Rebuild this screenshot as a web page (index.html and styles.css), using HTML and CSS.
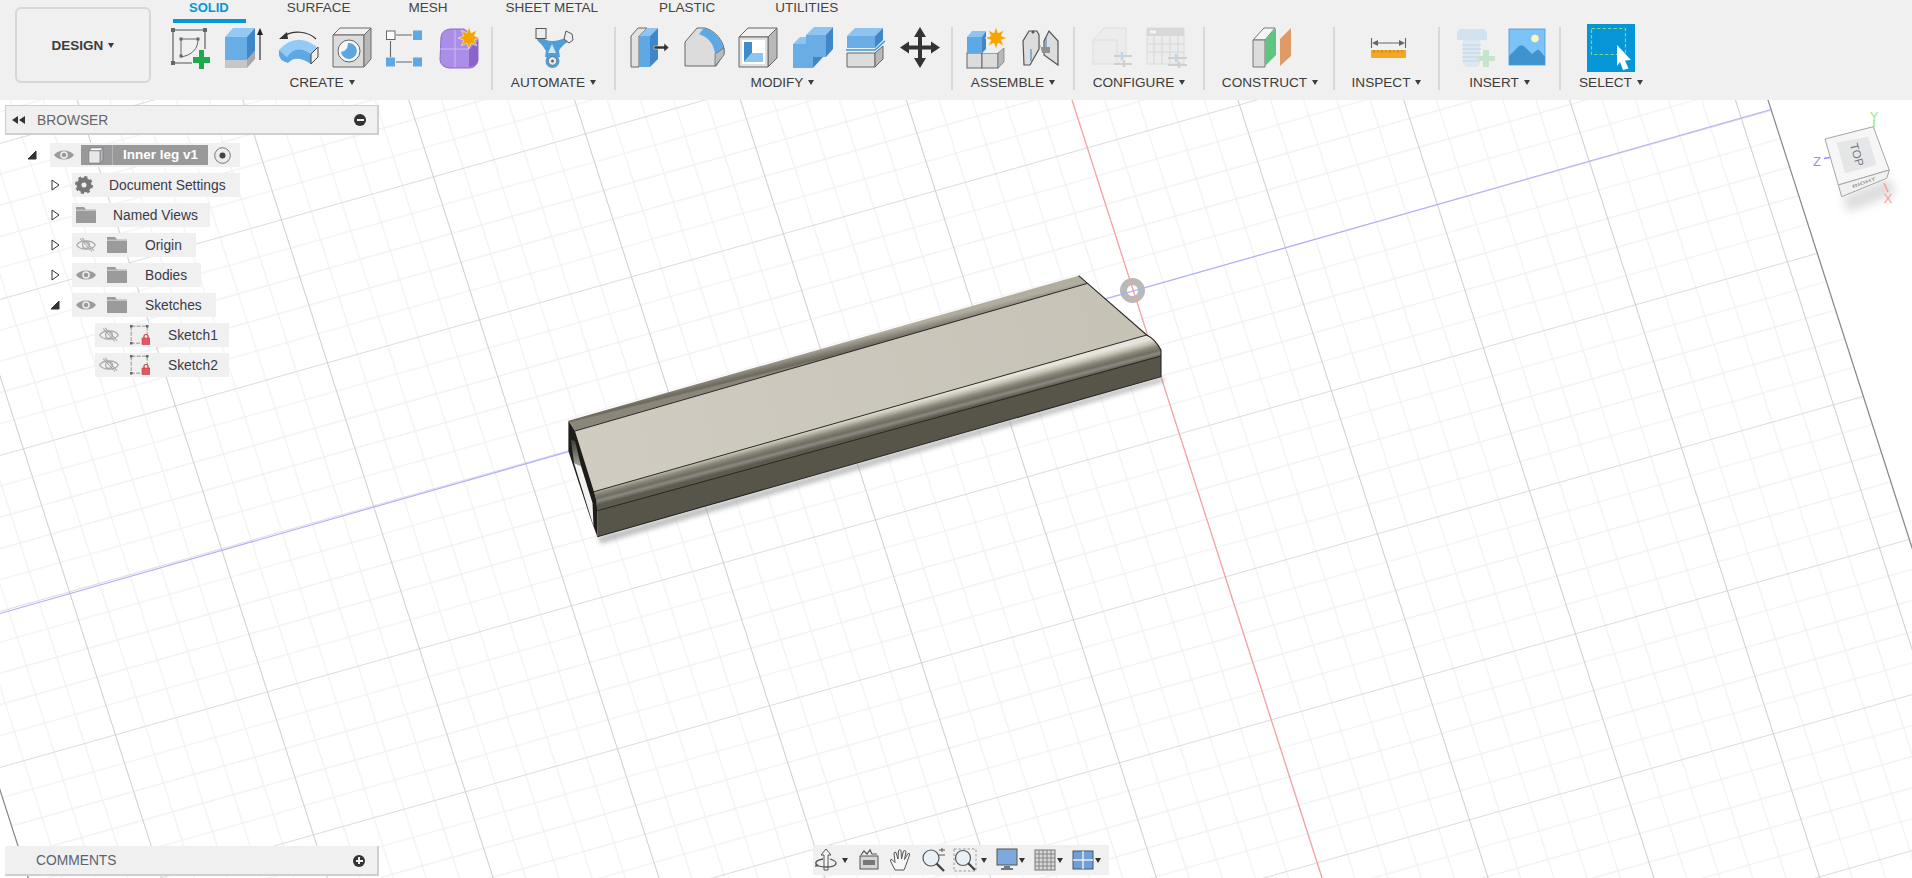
FILE: index.html
```html
<!DOCTYPE html>
<html lang="en">
<head>
<meta charset="utf-8">
<title>Inner leg v1</title>
<link rel="stylesheet" href="styles.css">
</head>
<body>
<svg class="defs" aria-hidden="true">
  <symbol id="eye" viewBox="0 0 20 20"><path d="M0 10C4 4 16 4 20 10C16 16 4 16 0 10Z" fill="#9b9b9b"/><circle cx="10" cy="10" r="3.8" fill="#f0f0f0"/><circle cx="10" cy="10" r="2.3" fill="#9b9b9b"/></symbol>
  <symbol id="eyeoff" viewBox="0 0 20 20"><path d="M0.7 10C4 4.5 16 4.5 19.3 10C16 15.5 4 15.5 0.7 10Z" fill="none" stroke="#a8a8a8" stroke-width="1.2"/><circle cx="10" cy="10" r="3.4" fill="none" stroke="#a8a8a8" stroke-width="1.2"/><path d="M4 3.5L16 16.5M6 2.8L18 15.6" stroke="#a8a8a8" stroke-width="1.1"/></symbol>
  <symbol id="folder" viewBox="0 0 20 16"><path d="M0 0H8L10 2.5H20V16H0Z" fill="#9b9b9b"/><path d="M0 3.2H20" stroke="#f0f0f0" stroke-width=".7"/></symbol>
  <symbol id="sketchlock" viewBox="0 0 20 20"><path d="M1.200 1.200H17.200V10M1.200 1.200V18.200H10" fill="none" stroke="#888" stroke-width=".9" stroke-dasharray="4 1.500"/><path d="M0 0h2.500v2.500h-2.500zM16 0h2.500v2.500h-2.500zM0 17h2.500v2.500h-2.500z" fill="#666"/><rect x="12" y="13" width="8" height="6.500" fill="#e2585e" stroke="#c43d43" stroke-width=".6"/><path d="M14 13V11.500a2 2 0 0 1 4 0V13" fill="none" stroke="#c43d43" stroke-width="1.200"/></symbol>
  <symbol id="star" viewBox="0 0 22 22"><path d="M11 0L13.100 5.900L18.800 3.200L16.100 8.900L22 11L16.100 13.100L18.800 18.800L13.100 16.100L11 22L8.900 16.100L3.200 18.800L5.900 13.100L0 11L5.900 8.900L3.200 3.200L8.900 5.900Z" fill="#f5a400" stroke="#f3f0e8" stroke-width=".6"/></symbol>
</svg>

<div class="app">
  <header class="toolbar">
    <button class="design caret">DESIGN</button>
    <div class="ribbon">
      <nav class="tabs">
        <span class="tab active">SOLID</span>
        <span class="tab">SURFACE</span>
        <span class="tab">MESH</span>
        <span class="tab">SHEET METAL</span>
        <span class="tab plastic">PLASTIC</span>
        <span class="tab utilities">UTILITIES</span>
      </nav>
      <div class="groups">
        <section class="group g-create">
          <div class="icons">
            <svg class="ic" viewBox="0 0 40 41"><path d="M3 3H35M3 3V36M3 36H22M35 3V22" stroke="#555" stroke-width="1.100" fill="none"/><path d="M1 1h4v4h-4zM33 1h4v4h-4zM1 34h4v4h-4z" fill="#666"/><path d="M11 12H28M11 12V29M28 12C28 22 22 28 11 30" stroke="#666" fill="none"/><path d="M9.500 10.500h3v3h-3zM26.500 10.500h3v3h-3zM9.500 27.500h3v3h-3z" fill="#666"/><path d="M23 30h6v-7h5v7h6v6h-6v6h-5v-6h-6z" fill="#20a84c"/></svg>
            <svg class="ic" viewBox="0 0 40 41"><path d="M1 10L9 1H31L23 10Z" fill="#93c9f3"/><path d="M1 10H23V33H1Z" fill="#69ade5"/><path d="M23 10L31 1V24L23 33Z" fill="#3f87c8"/><path d="M1 33H23V41H1Z" fill="#c6c6c6"/><path d="M23 33L31 24V32L23 41Z" fill="#a8a8a8"/><path d="M36 6V33" stroke="#222" stroke-width="1.100"/><path d="M36 1L33 8H39Z" fill="#222"/></svg>
            <svg class="ic" viewBox="0 0 40 41"><path d="M38 12C30 4 15 3 6 9" fill="none" stroke="#333" stroke-width="1.100"/><path d="M1 12L9 5L10 12Z" fill="#333"/><path d="M1 23Q18 4 39 20L33 27Q18 16 9 30Z" fill="#93cbf6"/><path d="M1 23L9 30Q18 16 33 27V37Q18 27 10 36Q1 33 1 28Z" fill="#5ca8e4"/><path d="M33 27L40 20V30L33 37Z" fill="#eee" stroke="#444"/></svg>
            <svg class="ic" viewBox="0 0 40 41"><path d="M1 8L8 1H39L32 8Z" fill="#f0f0f0" stroke="#6a6a6a"/><path d="M1 8H32V40H1Z" fill="#dcdcdc" stroke="#6a6a6a"/><path d="M32 8L39 1V32L32 40Z" fill="#b8b8b8" stroke="#6a6a6a"/><circle cx="17" cy="24" r="11" fill="#f7f7f7" stroke="#666"/><path d="M16 16a8 8 0 1 1-7 9q7-1 7-9z" fill="#5ea6e0"/></svg>
            <svg class="ic" viewBox="0 0 40 41"><path d="M10 8H26M4.500 14V30M10 35H26" stroke="#666" stroke-width="1.100"/><rect x=".5" y="4" width="8.500" height="8.500" fill="#fff" stroke="#666"/><rect x="27" y="3.500" width="9" height="9.500" fill="#5ea8e3"/><rect x="0" y="30.500" width="9" height="9" fill="#5ea8e3"/><rect x="27" y="30.500" width="9" height="9" fill="#5ea8e3"/></svg>
            <svg class="ic" viewBox="0 0 40 41"><path d="M1 10Q2 3 10 2H24L38 12V33Q37 40 30 41H9Q1 40 0 33Z" fill="#ab8ee8" stroke="#8a6cc8"/><path d="M29 22L38 14V33Q37 39 29 40Z" fill="#8b63c9"/><path d="M0 22H29M15 3V40" stroke="#cbbaf2"/><use href="#star" x="18" y="0" width="22" height="22"/></svg>
          </div>
          <div class="label caret">CREATE</div>
        </section>
        <section class="group g-automate">
          <div class="icons">
            <svg class="ic" viewBox="0 0 40 41"><path d="M5 9Q12 14 18 14Q25 14 33 10L35 14Q27 19 25 24L26 30H11L12 24Q9 18 3 13Z" fill="#4f9fd6"/><path d="M18 17L14 26H22Z" fill="#cfe5f5"/><circle cx="18.500" cy="34" r="7" fill="#4f9fd6"/><circle cx="18.500" cy="34" r="4.300" fill="#e8e8e8" stroke="#666" stroke-width=".8"/><circle cx="18.500" cy="34" r="1.500" fill="#666"/><rect x="2" y="1.500" width="10" height="10" fill="#eee" stroke="#555"/><path d="M32 4L38 7L39 13L35 16L30 12Z" fill="#eee" stroke="#555"/></svg>
          </div>
          <div class="label caret">AUTOMATE</div>
        </section>
        <section class="group g-modify">
          <div class="icons">
            <svg class="ic" viewBox="0 0 40 41"><path d="M1 40V9L8 1H17L9 9V40Z" fill="#e2e2e2" stroke="#666"/><path d="M9 9L17 1H28L20 9Z" fill="#8ec5f0"/><path d="M9 9H20V40H9Z" fill="#5ea8e3"/><path d="M20 9L28 1V32L20 40Z" fill="#3f87c8"/><path d="M24 19h10v-3l5 4.500-5 4.500v-3H24z" fill="#333" stroke="#fff" stroke-width=".5"/></svg>
            <svg class="ic" viewBox="0 0 40 41"><path d="M1 39V15L13 1H21C32 4 39 14 40 22V27L32 39Z" fill="#dcdcdc" stroke="#666"/><path d="M20 1C32 4 39 14 40 25L31 27C30 18 26 11 15 7Z" fill="#5ea8e3"/><path d="M31 27L40 21V28L31 39Z" fill="#bbb" stroke="#666" stroke-width=".7"/></svg>
            <svg class="ic" viewBox="0 0 40 41"><path d="M1 10L10 1H39L30 10Z" fill="#f0f0f0" stroke="#666"/><path d="M30 10L39 1V31L30 40Z" fill="#b8b8b8" stroke="#666"/><path d="M1 10H30V40H1Z" fill="#e0e0e0" stroke="#666"/><rect x="4" y="13" width="23" height="24" fill="#fff"/><path d="M6 15H14V26L6 35Z" fill="#3f8ccb"/><path d="M6 35L14 26H25V35Z" fill="#8ec5f0"/></svg>
            <svg class="ic" viewBox="0 0 40 41"><path d="M1 17L8 10H14V17Z" fill="#8ec5f0"/><path d="M1 17H21V41H1Z" fill="#6aade5"/><path d="M14 8H34V30H21V17H14Z" fill="#6aade5"/><path d="M14 8L22 0H41L34 8Z" fill="#8ec5f0"/><path d="M34 8L41 0V22L34 30Z" fill="#3f87c8"/><path d="M21 30H31L21 41Z" fill="#3f87c8"/></svg>
            <svg class="ic" viewBox="0 0 40 41"><path d="M1 9L9 1H37L29 9Z" fill="#8ec5f0"/><path d="M1 9H29V21H1Z" fill="#6aade5"/><path d="M29 9L37 1V13L29 21Z" fill="#3f87c8"/><path d="M0 23H29L39 14" fill="none" stroke="#2e9be0" stroke-width="1.600"/><path d="M1 26H29V40H1Z" fill="#dcdcdc" stroke="#666"/><path d="M29 26L37 19V32L29 40Z" fill="#b8b8b8" stroke="#666"/></svg>
            <svg class="ic" viewBox="0 0 40 41"><path d="M20 0L26 10H22V18.500H31V14.500L40 20.500L31 26.500V22.500H22V31H26L20 41L14 31H18V22.500H9V26.500L0 20.500L9 14.500V18.500H18V10H14Z" fill="#333"/></svg>
          </div>
          <div class="label caret">MODIFY</div>
        </section>
        <section class="group g-assemble">
          <div class="icons">
            <svg class="ic" viewBox="0 0 40 41"><rect x="1" y="26" width="15" height="15" fill="#dcdcdc" stroke="#666"/><rect x="16" y="26" width="16" height="15" fill="#dcdcdc" stroke="#666"/><path d="M16 26L22 21H38L32 26Z" fill="#eee"/><path d="M32 26L38 21V35L32 41Z" fill="#b8b8b8" stroke="#666" stroke-width=".6"/><path d="M1 10L6 4H20L16 10Z" fill="#8ec5f0"/><path d="M1 10H16V26H1Z" fill="#5ea8e3"/><path d="M16 10L20 4V22L16 26Z" fill="#3f87c8"/><use href="#star" x="19" y="0" width="22" height="22"/></svg>
            <svg class="ic" viewBox="0 0 40 41"><path d="M4 38L3 14L9 4H17L19 8V22L10 38Z" fill="#ddd" stroke="#555" stroke-width="1.200"/><path d="M24 14L29 4L38 14V38L24 28Z" fill="#ddd" stroke="#555" stroke-width="1.200"/><path d="M19 12V20H30V26H22" fill="#8f8f8f"/><path d="M11 22V34M26 10V20" stroke="#3f87c8" stroke-width="1.100"/><circle cx="13" cy="5" r="1.500" fill="#555"/></svg>
          </div>
          <div class="label caret">ASSEMBLE</div>
        </section>
        <section class="group g-configure">
          <div class="icons">
            <svg class="ic" viewBox="0 0 40 41"><path d="M1 13L12 1H34V28L26 37H1Z" fill="#ececec" stroke="#dedede"/><path d="M1 13H25V37" fill="none" stroke="#dedede"/><path d="M22 29H40M22 37H40" stroke="#cfcfcf" stroke-width="2"/><path d="M30 25V33" stroke="#bcd7ec" stroke-width="2.500"/><path d="M32 33V40" stroke="#cfcfcf" stroke-width="2.500"/></svg>
            <svg class="ic" viewBox="0 0 40 41"><rect x="1" y="1" width="37" height="36" fill="#ececec" stroke="#dcdcdc"/><rect x="1" y="1" width="37" height="8" fill="#d8d8d8"/><rect x="4" y="3.500" width="6" height="3" fill="#f4f4f4"/><path d="M8 9V37M16 9V37M24 9V37M32 9V37M1 17H38M1 25H38" stroke="#d6d6d6"/><path d="M22 31H41M22 38H41" stroke="#cfcfcf" stroke-width="2"/><path d="M30 27V35" stroke="#bcd7ec" stroke-width="2.500"/><path d="M33 35V41" stroke="#cfcfcf" stroke-width="2.500"/></svg>
          </div>
          <div class="label caret">CONFIGURE</div>
        </section>
        <section class="group g-construct">
          <div class="icons">
            <svg class="ic" viewBox="0 0 40 41"><path d="M2 13L13 1H24L14 13Z" fill="#f6f6f6" stroke="#777"/><path d="M2 13H14V40H2Z" fill="#dcdcdc" stroke="#777"/><path d="M14 13L25 1V28L14 39Z" fill="#5ec47f"/><path d="M29 12L40 1V29L29 39Z" fill="#e09a66"/></svg>
          </div>
          <div class="label caret">CONSTRUCT</div>
        </section>
        <section class="group g-inspect">
          <div class="icons">
            <svg class="ic" viewBox="0 0 40 41"><path d="M4.500 11V21M38.500 11V21M8 16H35" stroke="#666" stroke-width="1.100"/><path d="M5 16L11 13V19ZM38 16L32 13V19Z" fill="#666"/><rect x="4" y="23" width="35" height="8" fill="#f5a623"/><path d="M7 23v3M11 23v2M15 23v3M19 23v2M23 23v3M27 23v2M31 23v3M35 23v2" stroke="#a8701a" stroke-width=".8"/></svg>
          </div>
          <div class="label caret">INSPECT</div>
        </section>
        <section class="group g-insert">
          <div class="icons">
            <svg class="ic" viewBox="0 0 40 41"><path d="M4 7Q4 2 8 2H29Q34 2 34 7V13H4Z" fill="#d2e2ef"/><path d="M10 13H27V37L24 40H13L10 37Z" fill="#dbe8f2"/><path d="M9 18H28M9 22H28M9 26H28M9 30H28M9 34H27" stroke="#c2d5e4"/><path d="M30 23h6v6h6v5h-6v6h-6v-6h-6v-5h6z" fill="#c6e4cc"/></svg>
            <svg class="ic" viewBox="0 0 40 41"><rect x="3" y="2" width="36" height="36" fill="#7cc4f8"/><path d="M3 29L13 19Q16 17 19 20L26 27L31 23Q33 22 35 25L39 30V38H3Z" fill="#3f94d0"/><circle cx="29" cy="11.500" r="3.800" fill="#fdf5c0"/><rect x="3" y="2" width="36" height="36" fill="none" stroke="#4d9ad4" stroke-width=".8"/></svg>
          </div>
          <div class="label caret">INSERT</div>
        </section>
        <section class="group g-select">
          <div class="icons">
            <svg class="ic-sel" viewBox="0 0 48 48"><rect width="48" height="48" fill="#0696d7"/><rect x="4.500" y="4.500" width="34" height="26" fill="none" stroke="#78dc88" stroke-width="1.200" stroke-dasharray="3.500 2"/><path d="M30 21L44 36L38 36.500L41.500 44.500L36 46L33 38L30 42Z" fill="#fff"/></svg>
          </div>
          <div class="label caret">SELECT</div>
        </section>
      </div>
    </div>
  </header>

  <main class="viewport">
    <svg class="scene" viewBox="0 100 1912 778">
      <defs>
        <pattern id="gridcell" patternUnits="userSpaceOnUse" width="100" height="100">
          <path d="M20 0V100M40 0V100M60 0V100M80 0V100M0 20H100M0 40H100M0 60H100M0 80H100" stroke="#f0f0f2" stroke-width=".7" fill="none"/>
          <path d="M0 0.300H100" stroke="#dcdcdc" stroke-width=".7"/>
          <path d="M0.300 0V100" stroke="#cfcfcf" stroke-width=".7"/>
        </pattern>
        <linearGradient id="backBand" gradientUnits="userSpaceOnUse" x1="823" y1="347" x2="826" y2="359">
          <stop offset="0" stop-color="#b2ae9f"/><stop offset=".3" stop-color="#98948a"/><stop offset=".6" stop-color="#7e7a6d"/><stop offset=".85" stop-color="#6d695d"/><stop offset="1" stop-color="#8a867a"/>
        </linearGradient>
        <linearGradient id="frontBand" gradientUnits="userSpaceOnUse" x1="870" y1="413" x2="875" y2="432">
          <stop offset="0" stop-color="#e6e4dc"/><stop offset=".2" stop-color="#c6c3b7"/><stop offset=".45" stop-color="#8a867a"/><stop offset=".65" stop-color="#6f6c62"/><stop offset=".8" stop-color="#8b8983"/><stop offset="1" stop-color="#5d5a50"/>
        </linearGradient>
        <linearGradient id="flat" gradientUnits="userSpaceOnUse" x1="580" y1="460" x2="1140" y2="310">
          <stop offset="0" stop-color="#d0ccc2"/><stop offset="1" stop-color="#c6c2b6"/>
        </linearGradient>
        <linearGradient id="inner" gradientUnits="userSpaceOnUse" x1="571" y1="440" x2="578" y2="466">
          <stop offset="0" stop-color="#3d3b36"/><stop offset="1" stop-color="#a5a39d"/>
        </linearGradient>
        <filter id="soft" x="-10%" y="-50%" width="120%" height="200%"><feGaussianBlur stdDeviation="2"/></filter>
        <filter id="softer" x="-50%" y="-50%" width="200%" height="200%"><feGaussianBlur stdDeviation="5"/></filter>
      </defs>

      <g transform="matrix(1.52 -.43 .46 1.43 1132.8 290.5)">
        <rect x="-780" y="-600" width="1200" height="1200" fill="url(#gridcell)"/>
        <path d="M-780 -600V600M420 -600V600" stroke="#8a8a8a" stroke-width=".8"/>
      </g>
      <circle cx="1132.500" cy="290.500" r="9" fill="none" stroke="#b9b9b9" stroke-width="7"/>
      <path d="M0 613.500L1771 109.500" stroke="#adadff" stroke-width="1.100"/>
      <path d="M1072 100L1322 878" stroke="#ff9c9c" stroke-width="1.100"/>

      <path d="M597 537L1161 377L1166 381L601 544Z" fill="#8f8f8f" opacity=".55" filter="url(#soft)"/>
      <path d="M597.300 510L1161 354V376.700L597.300 536.700Z" fill="#57544a"/>
      <path d="M568.400 420.700L1078.600 275.700L1087 283.500L575 431Z" fill="url(#backBand)"/>
      <path d="M575 431L1087 283.500L1146.700 335L594 491.700Z" fill="url(#flat)"/>
      <path d="M594 491.700L1146.700 335Q1155 339 1161 350V356L597.300 510.700Q596 498 594 491.700Z" fill="url(#frontBand)"/>
      <path d="M568.400 420.700L575 431L594 491.700Q597 500 597.300 510.700V536.700L590 517L568.400 451Z" fill="#1e1d1a"/>
      <path d="M571 440L575 441L581 466L574 463Z" fill="url(#inner)"/>
      <path d="M574 463L581 466L592.500 503L593.500 526Z" fill="#f3f3f3"/>
      <path d="M575 431L1087 283.500M594 491.700L1146.700 335M597.300 510.700L1161 356" stroke="#29281f" stroke-width="1" fill="none"/>
      <path d="M1078.600 275.700L1146.700 335Q1155 339 1161 350V376.700L597.300 536.700" stroke="#26251f" stroke-width="1.100" fill="none"/>

      <path d="M1842 197L1889 178L1896 194L1848 212Z" fill="#777" opacity=".25" filter="url(#softer)"/>
      <path d="M1874 120V127" stroke="#8fef8f" stroke-width="1.500"/>
      <path d="M1824 158.500L1830 157.500" stroke="#8f8fff" stroke-width="1.500"/>
      <path d="M1884 183L1888 192" stroke="#ff9a9a" stroke-width="1.500"/>
      <text class="axis" x="1874" y="121" fill="#8fef8f">Y</text>
      <text class="axis" x="1817" y="166" fill="#8f8fff">Z</text>
      <text class="axis" x="1888" y="203" fill="#ff9a9a">X</text>
      <path d="M1825 139L1873.300 126.700L1889.300 170L1838.300 185Z" fill="#f6f6f6" stroke="#a5a5a5"/>
      <path d="M1838.300 185L1889.300 170L1886.700 178.300L1841.700 196.700Z" fill="#f1f1f1" stroke="#a5a5a5"/>
      <path d="M1836.700 142.700L1868 136.700L1876.700 165L1845 173.300Z" fill="#e5e6e8"/>
      <text class="cube-top" transform="translate(1856 155) rotate(74)">TOP</text>
      <text class="cube-right" transform="translate(1864 183) rotate(-20) scale(1 .55)">RIGHT</text>
    </svg>

    <aside class="panel panel-browser">
      <div class="panel-head">
        <svg class="rew" viewBox="0 0 13 8"><path d="M6 0V8L0 4ZM13 0V8L7 4Z" fill="#333"/></svg>
        <span class="panel-title">BROWSER</span>
        <span class="dot dot-minus"></span>
      </div>
    </aside>

    <div class="tree">
      <div class="row d0">
        <span class="exp"><svg viewBox="0 0 10 10"><path d="M9 1V9H1Z" fill="#333" stroke="#333"/></svg></span>
        <div class="chip chip-root">
          <svg class="t-eye"><use href="#eye"/></svg>
          <div class="selected">
            <svg class="cube" viewBox="0 0 18 18"><path d="M2 4L5 1H17L14 4Z" fill="#fff" stroke="#777" stroke-width=".7"/><path d="M2 4H14V17H2Z" fill="#e6e8ec" stroke="#777" stroke-width=".7"/><path d="M14 4L17 1V14L14 17Z" fill="#b4b8c0" stroke="#777" stroke-width=".7"/></svg>
            <span class="sel-text">Inner leg v1</span>
          </div>
          <svg class="radio" viewBox="0 0 17 17"><circle cx="8.500" cy="8.500" r="7.800" fill="#ececec" stroke="#777"/><circle cx="8.500" cy="8.500" r="3" fill="#444"/></svg>
        </div>
      </div>
      <div class="row d1">
        <span class="exp"><svg viewBox="0 0 10 12"><path d="M2 1L9 6L2 11Z" fill="#fff" stroke="#333"/></svg></span>
        <div class="chip chip-doc">
          <svg class="gear" viewBox="0 0 18 18"><circle cx="9" cy="9" r="5" fill="none" stroke="#777" stroke-width="5"/><circle cx="9" cy="9" r="7.800" fill="none" stroke="#777" stroke-width="2.400" stroke-dasharray="3.100 3.030"/></svg>
          <span class="name">Document Settings</span>
        </div>
      </div>
      <div class="row d1">
        <span class="exp"><svg viewBox="0 0 10 12"><path d="M2 1L9 6L2 11Z" fill="#fff" stroke="#333"/></svg></span>
        <div class="chip chip-views">
          <svg class="t-folder first"><use href="#folder"/></svg>
          <span class="name">Named Views</span>
        </div>
      </div>
      <div class="row d1">
        <span class="exp"><svg viewBox="0 0 10 12"><path d="M2 1L9 6L2 11Z" fill="#fff" stroke="#333"/></svg></span>
        <div class="chip chip-origin">
          <svg class="t-eye"><use href="#eyeoff"/></svg>
          <svg class="t-folder"><use href="#folder"/></svg>
          <span class="name">Origin</span>
        </div>
      </div>
      <div class="row d1">
        <span class="exp"><svg viewBox="0 0 10 12"><path d="M2 1L9 6L2 11Z" fill="#fff" stroke="#333"/></svg></span>
        <div class="chip chip-bodies">
          <svg class="t-eye"><use href="#eye"/></svg>
          <svg class="t-folder"><use href="#folder"/></svg>
          <span class="name">Bodies</span>
        </div>
      </div>
      <div class="row d1">
        <span class="exp"><svg viewBox="0 0 10 10"><path d="M9 1V9H1Z" fill="#333" stroke="#333"/></svg></span>
        <div class="chip chip-sketches">
          <svg class="t-eye"><use href="#eye"/></svg>
          <svg class="t-folder"><use href="#folder"/></svg>
          <span class="name">Sketches</span>
        </div>
      </div>
      <div class="row d2">
        <div class="chip chip-sketch">
          <svg class="t-eye"><use href="#eyeoff"/></svg>
          <svg class="t-lock"><use href="#sketchlock"/></svg>
          <span class="name">Sketch1</span>
        </div>
      </div>
      <div class="row d2">
        <div class="chip chip-sketch">
          <svg class="t-eye"><use href="#eyeoff"/></svg>
          <svg class="t-lock"><use href="#sketchlock"/></svg>
          <span class="name">Sketch2</span>
        </div>
      </div>
    </div>

    <aside class="panel panel-comments">
      <div class="panel-head">
        <span class="panel-title">COMMENTS</span>
        <span class="dot dot-plus"></span>
      </div>
    </aside>

    <div class="navbar">
      <div class="nav-group">
        <svg class="nv" viewBox="0 0 24 24"><path d="M12 1L17 7H14V22H10V7H7Z" fill="#f4f4f4" stroke="#555"/><path d="M9 11C3 12 1 14 2 16C4 19 10 19 12 19C17 19 22 18 22 15C22 13 19 12 16 11" fill="none" stroke="#555" stroke-width="1.300"/><path d="M2 15L1 19L5 18Z" fill="#555"/></svg>
        <i class="tri"></i>
      </div>
      <div class="nav-group">
        <svg class="nv" viewBox="0 0 24 24"><rect x="3" y="8" width="18" height="13" fill="#d5d5d5" stroke="#555"/><rect x="6" y="12" width="12" height="5" fill="#777"/><path d="M4 7L7 3L10 6L13 2L15 6H20" fill="none" stroke="#555" stroke-width="1.200"/></svg>
      </div>
      <div class="nav-group">
        <svg class="nv" viewBox="0 0 24 24"><path d="M6 22L1.500 13Q1 11 3 11.500L6 14.500L5 5Q5.500 3.500 7 4.500L9 11L9.500 2.500Q11 1 12 2.500L12.500 11L14.500 3Q16 2 17 3.500L15.500 11.500L19 5.500Q21 5 20.500 7L17 17L15 22Z" fill="#f6f6f6" stroke="#555"/></svg>
      </div>
      <div class="nav-group">
        <svg class="nv" viewBox="0 0 24 24"><circle cx="10" cy="10" r="8" fill="#e8f1f8" stroke="#555" stroke-width="1.200"/><path d="M15.500 15.500L23 23" stroke="#444" stroke-width="2.400"/><path d="M18 2H24M21 0V4M18 7H24" stroke="#555"/></svg>
      </div>
      <div class="nav-group">
        <svg class="nv" viewBox="0 0 24 24"><rect x="1" y="1" width="22" height="22" fill="none" stroke="#999" stroke-dasharray="2.500 2"/><circle cx="10" cy="10" r="7.500" fill="#e8f1f8" stroke="#555" stroke-width="1.200"/><path d="M15 15L22 22" stroke="#444" stroke-width="2.400"/></svg>
        <i class="tri"></i>
      </div>
      <div class="nav-group tight">
        <svg class="nv small" viewBox="0 0 22 24"><rect x="1" y="1" width="20" height="16" fill="#7ea9dc" stroke="#555"/><path d="M8 18H14V20H17V22H5V20H8Z" fill="#777"/></svg>
        <i class="tri"></i>
      </div>
      <div class="nav-group tight">
        <svg class="nv small" viewBox="0 0 22 24"><rect x="1" y="2" width="20" height="20" fill="#d7d7d7" stroke="#777"/><path d="M5 2V22M9 2V22M13 2V22M17 2V22M1 6H21M1 10H21M1 14H21M1 18H21" stroke="#777" stroke-width=".8"/></svg>
        <i class="tri"></i>
      </div>
      <div class="nav-group tight">
        <svg class="nv small" viewBox="0 0 22 24"><rect x="1" y="3" width="20" height="18" fill="#6f9fd8" stroke="#456"/><path d="M11 3V21M1 12H21" stroke="#f0f0f0" stroke-width="1.400"/></svg>
        <i class="tri"></i>
      </div>
    </div>
  </main>
</div>
</body>
</html>
```
FILE: styles.css
```css
* { box-sizing: border-box; }
html, body { margin: 0; height: 100%; overflow: hidden; }
body { font-family: "Liberation Sans", Arial, sans-serif; color: #3c3c3c; background: #fff; }
.defs { position: absolute; width: 0; height: 0; }

.app { display: flex; flex-direction: column; height: 878px; }

.toolbar { display: flex; align-items: flex-start; height: 100px; flex: none; padding-left: 15px; background: #f0f0f0; }
.design { width: 136px; height: 76px; margin: 7px 8px 0 0; padding: 0; border: 2px solid #d6d6d6; border-radius: 6px; background: #f0f0f0; font: bold 13.5px "Liberation Sans", Arial, sans-serif; color: #3c3c3c; }
.caret::after { content: ""; display: inline-block; margin-left: 5px; vertical-align: 2px; border-left: 3.5px solid transparent; border-right: 3.5px solid transparent; border-top: 5px solid #3c3c3c; }

.ribbon { display: flex; flex-direction: column; }
.tabs { display: flex; gap: 58px; height: 27px; padding-left: 30px; font-size: 13.5px; line-height: 16px; }
.tab { position: relative; height: 16px; color: #444; white-space: nowrap; }
.tab.plastic { margin-left: 3px; }
.tab.utilities { margin-left: 2px; }
.tab.active { color: #0696d7; font-weight: bold; font-size: 13px; }
.tab.active::after { content: ""; position: absolute; left: -16px; right: -17px; top: 19px; height: 4px; background: #0696d7; }

.groups { display: flex; height: 63px; }
.group { display: flex; flex-direction: column; align-items: center; height: 63px; border-right: 2px solid #d8d8d8; }
.g-create { width: 334px; }
.g-automate { width: 123px; }
.g-modify { width: 337px; }
.g-assemble { width: 122px; }
.g-configure { width: 130px; }
.g-construct { width: 130px; }
.g-inspect { width: 105px; }
.g-insert { width: 121px; }
.g-select { width: 100px; border-right: 0; }

.icons { display: flex; gap: 14px; height: 41px; }
.g-modify .icons { margin-left: 3px; }
.g-construct .icons { margin-left: 3px; }
.g-insert .icons { gap: 13px; }
.ic { width: 40px; height: 41px; overflow: visible; }
.ic-sel { width: 48px; height: 48px; margin-top: -3px; }
.label { margin-top: 6px; height: 18px; font-size: 13.6px; line-height: 18px; color: #3c3c3c; white-space: nowrap; }
.g-create .label { margin-right: 6px; }
.g-modify .label { margin-right: 2px; }
.g-construct .label { margin-left: 2px; }

.viewport { position: relative; flex: 1; overflow: hidden; background: #fff; }
.scene { position: absolute; inset: 0; width: 1912px; height: 778px; }
.axis { font: 13px "Liberation Sans", Arial, sans-serif; text-anchor: middle; }
.cube-top { font: 11.5px "Liberation Sans", Arial, sans-serif; fill: #777; text-anchor: middle; dominant-baseline: middle; }
.cube-right { font: bold 8px "Liberation Sans", Arial, sans-serif; fill: #999; text-anchor: middle; dominant-baseline: middle; }

.panel { position: absolute; left: 5px; width: 374px; height: 30px; background: #f0f0f0; border: 1px solid #cfcfcf; border-bottom-width: 2px; border-right-width: 2px; }
.panel-browser { top: 5px; }
.panel-comments { bottom: 2px; border-top: 0; border-left: 0; }
.panel-head { display: flex; align-items: center; height: 100%; padding: 1px 11px 0 6px; }
.panel-comments .panel-head { padding-left: 31px; padding-right: 12px; }
.rew { width: 13px; height: 8px; margin-right: 12px; }
.panel-title { flex: 1; font-size: 13.800px; color: #666; }
.panel-comments .panel-title { color: #5a6470; }
.dot { position: relative; width: 12px; height: 12px; border-radius: 50%; background: #333; }
.dot::before { content: ""; position: absolute; left: 2.500px; right: 2.500px; top: 5px; height: 2px; background: #f0f0f0; }
.dot-plus::after { content: ""; position: absolute; top: 2.500px; bottom: 2.500px; left: 5px; width: 2px; background: #f0f0f0; }

.tree { position: absolute; top: 43px; left: 0; display: flex; flex-direction: column; gap: 6px; font-size: 13.800px; color: #3a3a4a; }
.row { display: flex; align-items: center; height: 24px; }
.d0 { padding-left: 27px; }
.d1 { padding-left: 50px; }
.d2 { padding-left: 95px; }
.exp { display: flex; align-items: center; flex: none; }
.exp svg { width: 10px; height: 12px; }
.d0 .exp { width: 23px; }
.d1 .exp { width: 22px; }
.chip { display: flex; align-items: center; height: 24px; background: #f0f0f0; }
.chip-root { width: 190px; padding-left: 4px; }
.chip-doc { width: 168px; }
.chip-views { width: 138px; }
.chip-origin { width: 124px; }
.chip-bodies { width: 129px; }
.chip-sketches { width: 144px; }
.chip-sketch { width: 134px; padding-left: 4px; }
.t-eye { width: 20px; height: 20px; flex: none; margin-left: 4px; }
.chip-root .t-eye { margin-left: 0; margin-right: 7px; }
.chip-sketch .t-eye { margin-left: 0; }
.t-folder { width: 20px; height: 16px; flex: none; margin-left: 11px; }
.t-folder.first { margin-left: 4px; }
.t-lock { width: 20px; height: 20px; flex: none; margin-left: 11px; }
.name { white-space: nowrap; }
.chip-doc .name { margin-left: 16px; }
.chip-views .name { margin-left: 17px; }
.chip-origin .name, .chip-bodies .name, .chip-sketches .name { margin-left: 18px; }
.chip-sketch .name { margin-left: 18px; }
.gear { width: 18px; height: 18px; margin-left: 3px; flex: none; }
.selected { display: flex; align-items: center; width: 127px; height: 20px; background: #999; }
.cube { width: 17px; height: 17px; margin-left: 6px; flex: none; }
.sel-text { flex: 1; margin-left: 8px; border-left: 1px solid #b5b5b5; height: 20px; line-height: 20px; text-align: center; font-weight: bold; font-size: 13.5px; color: #fff; }
.radio { width: 17px; height: 17px; margin-left: 6px; flex: none; }

.navbar { position: absolute; left: 813px; bottom: 3px; width: 296px; height: 30px; display: flex; align-items: center; gap: 8px; padding-left: 1px; background: #f0f0f0; }
.nav-group { display: flex; align-items: center; gap: 3px; }
.nav-group.tight { gap: 0; }
.nv { width: 24px; height: 24px; flex: none; }
.nv.small { width: 22px; }
.tri { width: 8px; display: flex; justify-content: center; }
.tri::before { content: ""; border-left: 3.500px solid transparent; border-right: 3.500px solid transparent; border-top: 5px solid #333; }
```
